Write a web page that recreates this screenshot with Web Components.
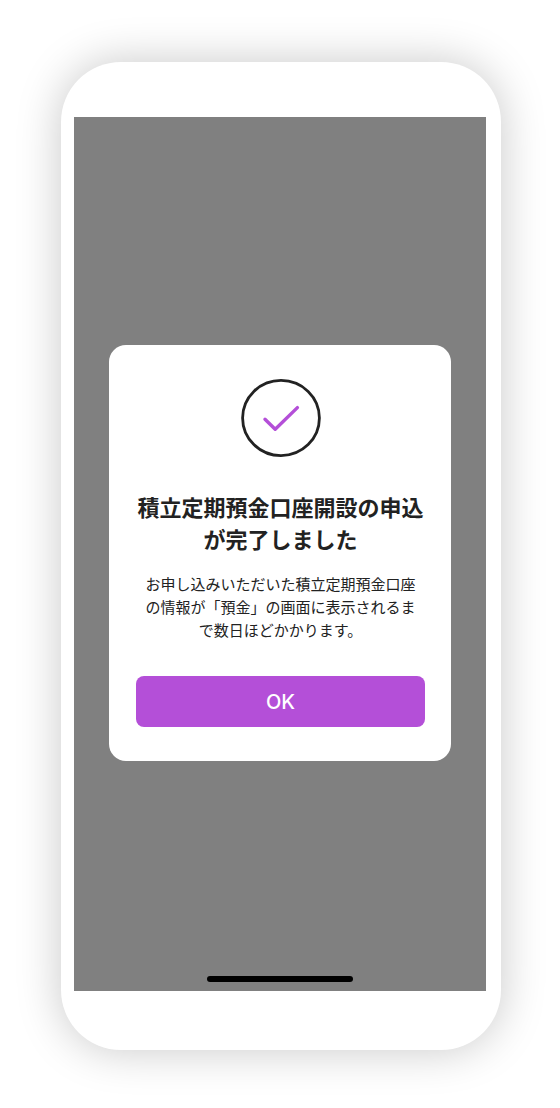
<!DOCTYPE html>
<html lang="ja">
<head>
<meta charset="utf-8">
<meta name="viewport" content="width=device-width, initial-scale=1">
<title>積立定期預金</title>
<style>
  body {
    box-sizing: border-box;
    display: flex;
    min-height: 100vh;
    margin: 0;
    padding: 62px 59px 58px 61px;
    background: #fff;
    color: #222;
    font-family: "Noto Sans CJK JP", sans-serif;
  }
</style>
</head>
<body>
  <phone-frame>
    <result-dialog>
      <check-mark slot="icon"></check-mark>
      <span slot="title">積立定期預金口座開設の申込が完了しました</span>
      お申し込みいただいた積立定期預金口座の情報が「預金」の画面に表示されるまで数日ほどかかります。
      <action-button slot="action">OK</action-button>
    </result-dialog>
  </phone-frame>

<script>
class BaseElement extends HTMLElement {
  constructor() {
    super()
    const template = document.createElement("template")
    template.innerHTML = this.constructor.markup
    this.attachShadow({ mode: "open" }).append(template.content.cloneNode(true))
  }
}

class PhoneFrame extends BaseElement {
  static markup = `
    <style>
      :host {
        box-sizing: border-box;
        display: flex;
        flex: 1;
        min-width: 0;
        padding: 55px 15px 59px 13px;
        border-radius: 60px;
        background: #fff;
        box-shadow: 0 0 45px rgba(0, 0, 0, 0.22);
      }

      .screen {
        flex: 1;
        min-width: 0;
        display: grid;
        grid-template-rows: 1fr auto 1fr;
        padding: 0 35px 2px;
        background: #808080;
      }

      main {
        grid-row: 2;
      }

      .home-bar {
        grid-row: 3;
        place-self: end center;
        width: 146px;
        height: 6px;
        margin-bottom: 7px;
        border-radius: 3px;
        background: #000;
      }
    </style>
    <div class="screen">
      <main><slot></slot></main>
      <div class="home-bar"></div>
    </div>
  `
}

class ResultDialog extends BaseElement {
  static markup = `
    <style>
      :host {
        display: block;
      }

      section {
        display: flex;
        flex-direction: column;
        padding: 34px 26px 34px 27px;
        border-radius: 17px;
        background: #fff;
        text-align: center;
      }

      h1 {
        margin: 33px 0 18px;
        font-size: 22px;
        font-weight: 700;
        line-height: 32px;
      }

      p {
        margin: 0 8px 35px;
        font-size: 15px;
        font-weight: 400;
        line-height: 23px;
      }
    </style>
    <section role="dialog" aria-labelledby="title" aria-describedby="message">
      <slot name="icon"></slot>
      <h1 id="title"><slot name="title"></slot></h1>
      <p id="message"><slot></slot></p>
      <slot name="action"></slot>
    </section>
  `
}

class CheckMark extends BaseElement {
  static markup = `
    <style>
      :host {
        display: flex;
        justify-content: center;
      }
    </style>
    <svg width="80" height="78" viewBox="0 0 80 78" fill="none" aria-hidden="true">
      <ellipse cx="40" cy="39" rx="38.4" ry="37.6" stroke="#222" stroke-width="2.8"/>
      <path d="M24 40.2 34.2 50.2 56.4 28.6" stroke="#b44fd8" stroke-width="3.4" stroke-linecap="round" stroke-linejoin="round"/>
    </svg>
  `
}

class ActionButton extends BaseElement {
  static markup = `
    <style>
      :host {
        display: block;
      }

      button {
        display: block;
        width: 100%;
        height: 51px;
        padding: 0;
        border: 0;
        border-radius: 8px;
        background: #b44fd8;
        color: #fff;
        font: 500 20px/24px Inter, sans-serif;
        cursor: pointer;
      }
    </style>
    <button type="button"><slot></slot></button>
  `
}

customElements.define("phone-frame", PhoneFrame)
customElements.define("result-dialog", ResultDialog)
customElements.define("check-mark", CheckMark)
customElements.define("action-button", ActionButton)
</script>
</body>
</html>
